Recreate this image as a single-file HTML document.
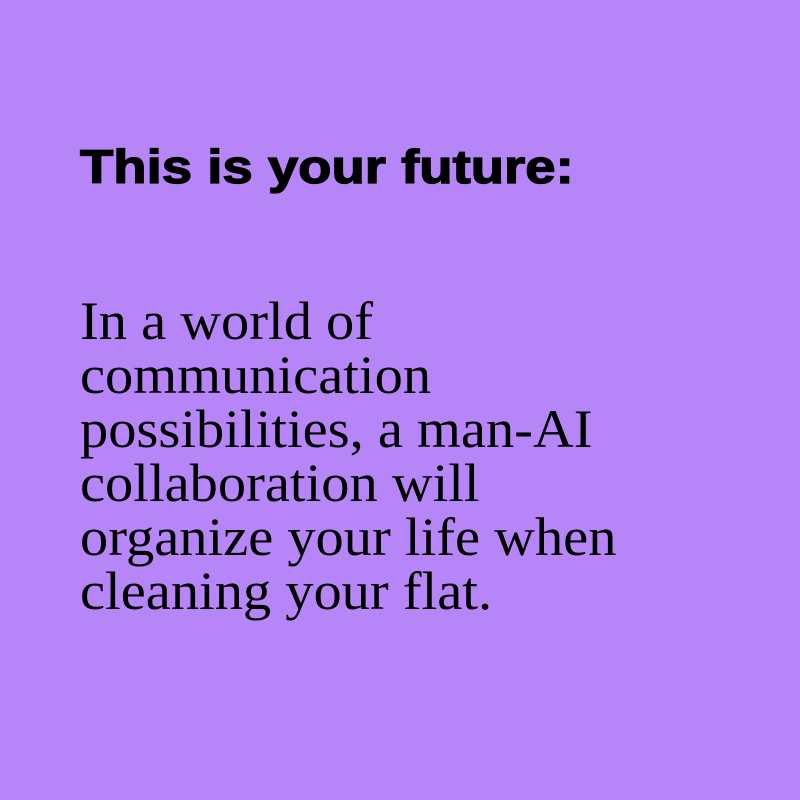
<!DOCTYPE html>
<html><head><style>
html,body{margin:0;padding:0;}
body{width:800px;height:800px;background:#b685f8;position:relative;overflow:hidden;}
h1{position:absolute;left:80px;top:143px;margin:0;font:bold 47px/47px "Liberation Sans",sans-serif;color:#000;white-space:nowrap;transform:scaleX(1.16);transform-origin:0 0;-webkit-text-stroke:1.3px #000;}
p{position:absolute;left:80px;top:294px;margin:0;width:600px;font:54px/54px "Liberation Serif",serif;color:#000;transform:scaleX(1.045);transform-origin:0 0;}
</style></head><body>
<h1>This is your future:</h1>
<p>In a world of<br>communication<br>possibilities, a man-AI<br>collaboration will<br>organize your life when<br>cleaning your flat.</p>
</body></html>
